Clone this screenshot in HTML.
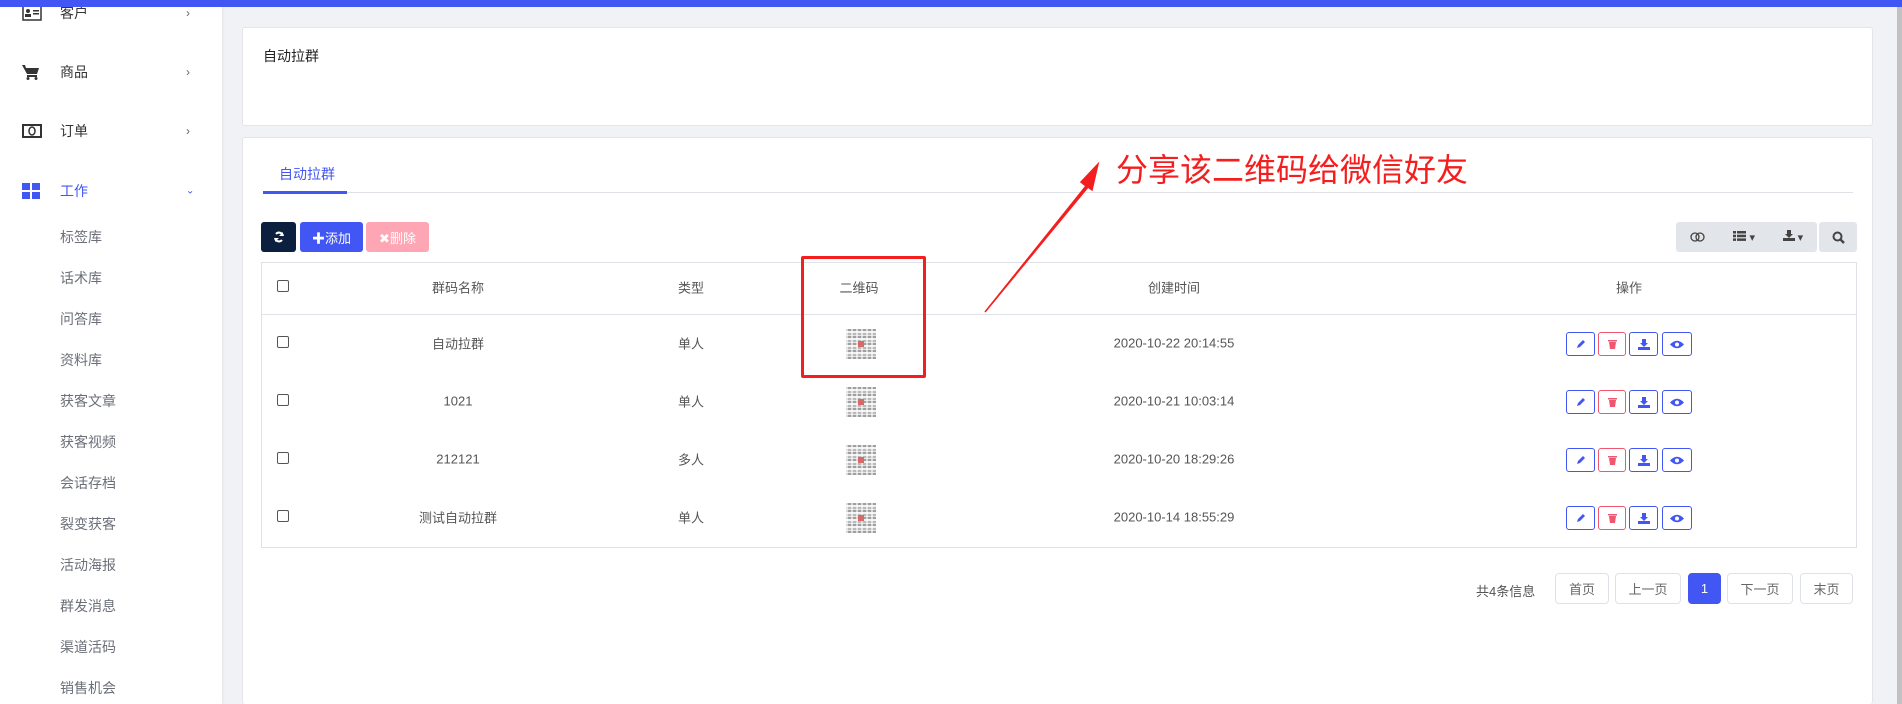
<!DOCTYPE html>
<html style="width:1902px;height:704px;overflow:hidden"><head><meta charset="utf-8"><style>
*{box-sizing:border-box;margin:0;padding:0}
body{width:1902px;height:704px;overflow:hidden;background:#f1f2f6;font-family:"Liberation Sans","Noto Sans CJK SC",sans-serif;font-size:13px;color:#555;position:relative}
.abs{position:absolute}
.top{left:0;top:0;width:1902px;height:7px;background:#4256f4;z-index:5}
.side{left:0;top:0;width:222px;height:704px;background:#fff;box-shadow:1px 0 3px rgba(0,0,0,.06)}
.mi{position:absolute;left:60px;font-size:14px;color:#333;transform:translateY(-50%)}
.ic{position:absolute;left:22px;transform:translateY(-50%)}
.ar{position:absolute;left:186px;color:#666;font-size:12px;transform:translateY(-50%)}
.sub{position:absolute;left:60px;font-size:14px;color:#6b6f78;transform:translateY(-50%)}
.card{background:#fff;border:1px solid #e3e5ea;border-radius:3px}
.btn{position:absolute;top:222px;height:30px;border-radius:3px;color:#fff;font-size:13px;display:flex;align-items:center;justify-content:center}
.c{position:absolute;transform:translate(-50%,-50%);white-space:nowrap}
.cb{position:absolute;left:277px;width:12px;height:12px;border:1px solid #555;border-radius:2px;background:#fff}
.hl{position:absolute;left:261px;width:1596px;height:1px;background:#dee2e6}
.ab{position:absolute;width:29px;height:24px;border:1px solid #4256f4;border-radius:3px;background:#fff;display:flex;align-items:center;justify-content:center}
.qr{position:absolute;left:846px;width:30px;height:30px;background:
repeating-linear-gradient(90deg,rgba(255,255,255,.6) 0 2px,transparent 2px 5px),
repeating-linear-gradient(0deg,#888 0 2px,#ddd 2px 3px,#aaa 3px 5px,#eee 5px 7px);opacity:.8}
.qr::before{content:"";position:absolute;left:12px;top:12px;width:6px;height:6px;background:#c44}
.pg{position:absolute;top:573px;height:31px;border:1px solid #dee2e6;border-radius:4px;background:#fff;display:flex;align-items:center;justify-content:center;font-size:13px;color:#666}
</style></head><body>
<div class="abs top"></div>
<div class="abs side">
 <svg class="ic" style="top:13px" width="20" height="16" viewBox="0 0 20 16"><rect x="1" y="1" width="18" height="14" fill="none" stroke="#333" stroke-width="1.5"/><circle cx="6" cy="6" r="2" fill="#333"/><rect x="3" y="9" width="6" height="3" fill="#333"/><rect x="11" y="5" width="6" height="1.5" fill="#333"/><rect x="11" y="8" width="6" height="1.5" fill="#333"/></svg>
 <div class="mi" style="top:13px">客户</div><div class="ar" style="top:13px">›</div>
 <svg class="ic" style="top:72px" width="18" height="16" viewBox="0 0 18 16"><path d="M0 1h3l1 3h13l-2 6H5z" fill="#333"/><rect x="5" y="11" width="10" height="2" fill="#333"/><circle cx="6" cy="14.5" r="1.5" fill="#333"/><circle cx="14" cy="14.5" r="1.5" fill="#333"/></svg>
 <div class="mi" style="top:72px">商品</div><div class="ar" style="top:72px">›</div>
 <svg class="ic" style="top:131px" width="20" height="14" viewBox="0 0 20 14"><rect x="1" y="1" width="18" height="12" fill="none" stroke="#333" stroke-width="2"/><ellipse cx="10" cy="7" rx="3" ry="4" fill="none" stroke="#333" stroke-width="1.5"/></svg>
 <div class="mi" style="top:131px">订单</div><div class="ar" style="top:131px">›</div>
 <svg class="ic" style="top:191px" width="18" height="16" viewBox="0 0 18 16"><rect x="0" y="0" width="8" height="7" fill="#4256f4"/><rect x="10" y="0" width="8" height="7" fill="#4256f4"/><rect x="0" y="9" width="8" height="7" fill="#4256f4"/><rect x="10" y="9" width="8" height="7" fill="#4256f4"/></svg>
 <div class="mi" style="top:191px;color:#4256f4">工作</div><div class="ar" style="top:191px;color:#4256f4;font-size:10px">⌄</div>
 <div class="sub" style="top:237px">标签库</div>
 <div class="sub" style="top:278px">话术库</div>
 <div class="sub" style="top:319px">问答库</div>
 <div class="sub" style="top:360px">资料库</div>
 <div class="sub" style="top:401px">获客文章</div>
 <div class="sub" style="top:442px">获客视频</div>
 <div class="sub" style="top:483px">会话存档</div>
 <div class="sub" style="top:524px">裂变获客</div>
 <div class="sub" style="top:565px">活动海报</div>
 <div class="sub" style="top:606px">群发消息</div>
 <div class="sub" style="top:647px">渠道活码</div>
 <div class="sub" style="top:688px">销售机会</div>
</div>
<div class="abs card" style="left:242px;top:27px;width:1631px;height:99px"></div>
<div class="abs" style="left:263px;top:46px;font-size:14px;color:#222">自动拉群</div>
<div class="abs card" style="left:242px;top:137px;width:1631px;height:567px;border-bottom:none"></div>
<div class="abs" style="left:279px;top:164px;font-size:14px;color:#4256f4">自动拉群</div>
<div class="abs" style="left:263px;top:192px;width:1590px;height:1px;background:#dee2e6"></div>
<div class="abs" style="left:263px;top:191px;width:84px;height:3px;background:#4256f4"></div>
<div class="btn" style="left:261px;width:35px;background:#0b1f3f"><svg width="12" height="12" viewBox="0 0 12 12"><path d="M10 5A4 4 0 0 0 3 3M2 7a4 4 0 0 0 7 2" stroke="#fff" stroke-width="2" fill="none"/><path d="M10 1v4H6zM2 11V7h4z" fill="#fff"/></svg></div>
<div class="btn" style="left:300px;width:63px;background:#4256f4">✚添加</div>
<div class="btn" style="left:366px;width:63px;background:#fea6b4">✖删除</div>
<div class="btn" style="left:1676px;width:141px;background:#e2e5e9;color:#444;justify-content:space-around;font-size:11px">
<svg width="16" height="10" viewBox="0 0 16 10"><circle cx="5" cy="5" r="4" fill="none" stroke="#444" stroke-width="1.3"/><circle cx="10" cy="5" r="4" fill="none" stroke="#444" stroke-width="1.3"/></svg>
<span><svg width="13" height="10" viewBox="0 0 13 10"><rect x="0" y="0" width="3" height="2.5" fill="#444"/><rect x="4" y="0" width="9" height="2.5" fill="#444"/><rect x="0" y="3.7" width="3" height="2.5" fill="#444"/><rect x="4" y="3.7" width="9" height="2.5" fill="#444"/><rect x="0" y="7.4" width="3" height="2.5" fill="#444"/><rect x="4" y="7.4" width="9" height="2.5" fill="#444"/></svg> ▾</span>
<span><svg width="12" height="11" viewBox="0 0 12 11"><path d="M4 0h4v4h2L6 8 2 4h2z" fill="#444"/><rect x="0" y="8" width="12" height="3" fill="#444"/></svg> ▾</span></div>
<div class="btn" style="left:1819px;width:38px;background:#e2e5e9;color:#444"><svg width="13" height="13" viewBox="0 0 13 13"><circle cx="5.5" cy="5.5" r="4" stroke="#444" stroke-width="2" fill="none"/><path d="M8.5 8.5l3.5 3.5" stroke="#444" stroke-width="2.4"/></svg></div>
<div class="abs" style="left:261px;top:262px;width:1596px;height:286px;border:1px solid #dee2e6;background:#fff"></div>
<div class="hl" style="top:314px"></div>
<div class="cb" style="top:280px"></div>
<div class="c" style="left:458px;top:287px">群码名称</div>
<div class="c" style="left:691px;top:287px">类型</div>
<div class="c" style="left:859px;top:287px">二维码</div>
<div class="c" style="left:1174px;top:287px">创建时间</div>
<div class="c" style="left:1629px;top:287px">操作</div>

<div class="cb" style="top:336px"></div><div class="c" style="left:458px;top:343px">自动拉群</div><div class="c" style="left:691px;top:343px">单人</div><div class="qr" style="top:329px"></div><div class="c" style="left:1174px;top:343px">2020-10-22 20:14:55</div>
<div class="cb" style="top:394px"></div><div class="c" style="left:458px;top:401px">1021</div><div class="c" style="left:691px;top:401px">单人</div><div class="qr" style="top:387px"></div><div class="c" style="left:1174px;top:401px">2020-10-21 10:03:14</div>
<div class="cb" style="top:452px"></div><div class="c" style="left:458px;top:459px">212121</div><div class="c" style="left:691px;top:459px">多人</div><div class="qr" style="top:445px"></div><div class="c" style="left:1174px;top:459px">2020-10-20 18:29:26</div>
<div class="cb" style="top:510px"></div><div class="c" style="left:458px;top:517px">测试自动拉群</div><div class="c" style="left:691px;top:517px">单人</div><div class="qr" style="top:503px"></div><div class="c" style="left:1174px;top:517px">2020-10-14 18:55:29</div>

<div id="acts"></div>
<script>
var h='';[332,390,448,506].forEach(function(t){
h+='<div class="ab" style="left:1566px;top:'+t+'px"><svg width="10" height="10" viewBox="0 0 10 10"><path d="M1 9l1-3 5-5 2 2-5 5z" fill="#4256f4"/></svg></div>';
h+='<div class="ab" style="left:1598px;top:'+t+'px;border-color:#f05670;width:28px"><svg width="9" height="10" viewBox="0 0 9 10"><rect x="0" y="1" width="9" height="1.5" fill="#f05670"/><path d="M1 3h7l-1 7H2z" fill="#f05670"/></svg></div>';
h+='<div class="ab" style="left:1629px;top:'+t+'px"><svg width="12" height="11" viewBox="0 0 12 11"><path d="M4 0h4v4h2L6 8 2 4h2z" fill="#4256f4"/><rect x="0" y="8" width="12" height="3" fill="#4256f4"/></svg></div>';
h+='<div class="ab" style="left:1662px;top:'+t+'px;width:30px"><svg width="14" height="9" viewBox="0 0 14 9"><path d="M0 4.5Q7-3 14 4.5 7 12 0 4.5z" fill="#4256f4"/><circle cx="7" cy="4.5" r="2" fill="#fff"/></svg></div>';
});document.getElementById('acts').outerHTML=h;
</script>
<div class="abs" style="left:1476px;top:581px;font-size:13px;color:#555">共4条信息</div>
<div class="pg" style="left:1555px;width:54px">首页</div>
<div class="pg" style="left:1615px;width:66px">上一页</div>
<div class="pg" style="left:1688px;width:33px;background:#4256f4;border-color:#4256f4;color:#fff">1</div>
<div class="pg" style="left:1727px;width:66px">下一页</div>
<div class="pg" style="left:1800px;width:53px">末页</div>
<div class="abs" style="left:1897px;top:0;width:5px;height:704px;background:#c1c1c1"></div>

<div class="abs" style="left:801px;top:256px;width:125px;height:122px;border:3px solid #f41e1e;border-radius:2px"></div>
<svg class="abs" style="left:0;top:0" width="1902" height="704"><path d="M985 312L1086 186 1081 182 1098 164 1092 190 1088 187z" fill="#f41e1e" stroke="#f41e1e" stroke-width="1.5"/></svg>
<div class="abs" style="left:1116px;top:150px;font-size:32px;color:#f41e1e;line-height:40px;white-space:nowrap">分享该二维码给微信好友</div>
</body></html>
